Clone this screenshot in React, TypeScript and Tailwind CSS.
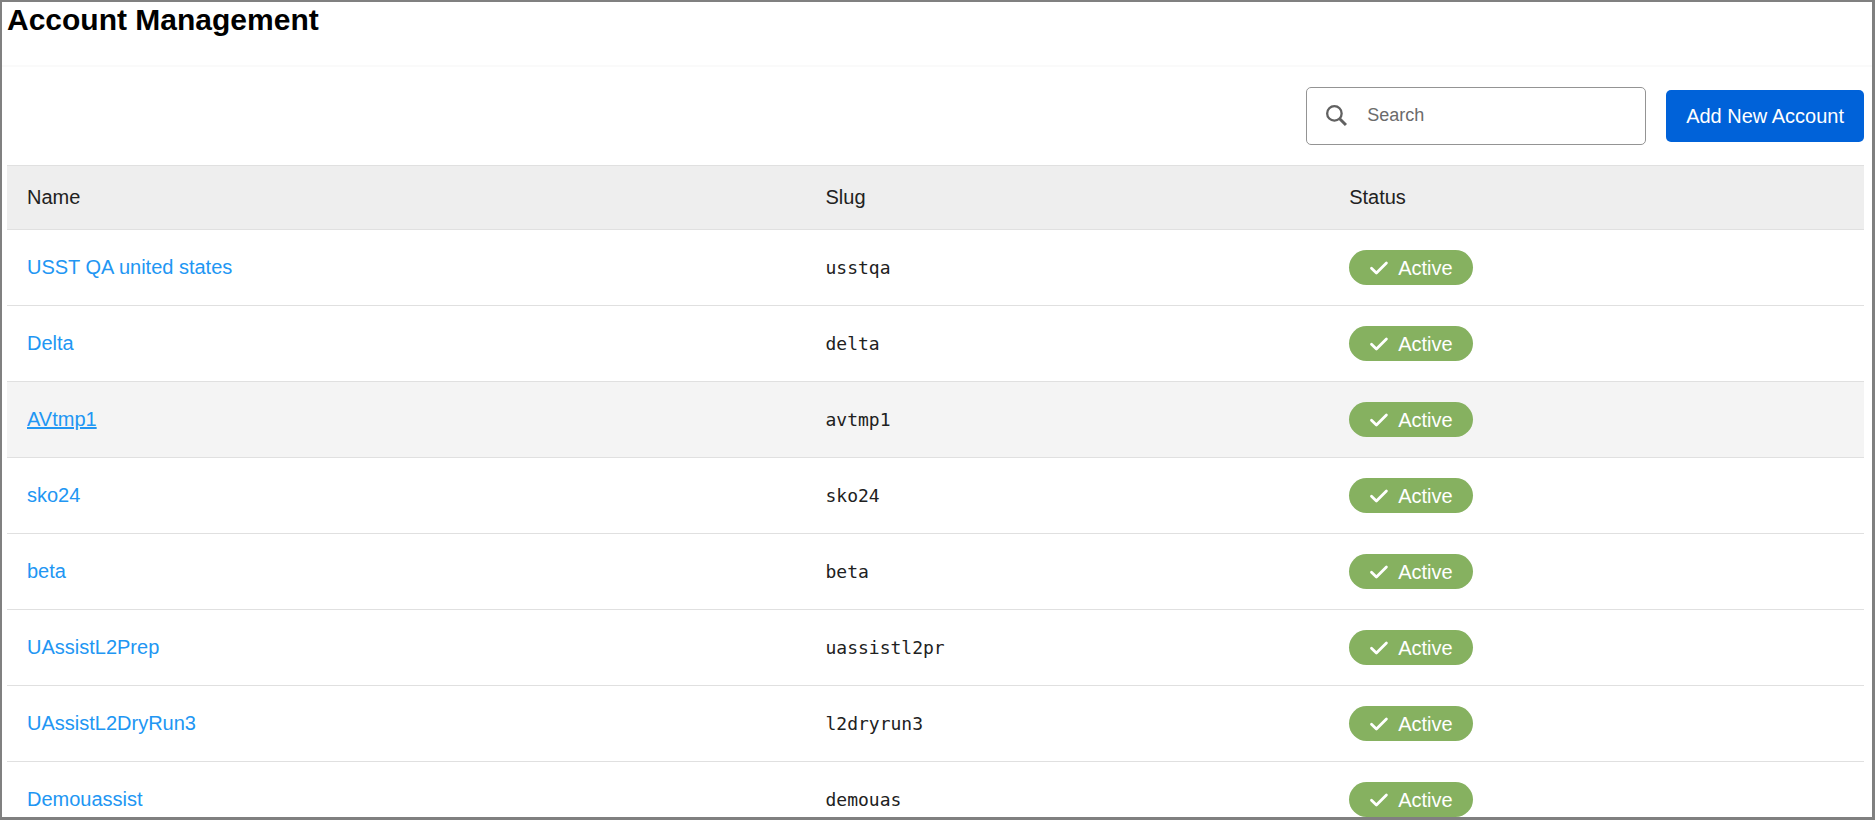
const accounts = [
  { name: "USST QA united states", slug: "usstqa" },
  { name: "Delta", slug: "delta" },
  { name: "AVtmp1", slug: "avtmp1", hovered: true },
  { name: "sko24", slug: "sko24" },
  { name: "beta", slug: "beta" },
  { name: "UAssistL2Prep", slug: "uassistl2pr" },
  { name: "UAssistL2DryRun3", slug: "l2dryrun3" },
  { name: "Demouassist", slug: "demouas" },
];

function SearchIcon() {
  return (
    <svg viewBox="0 0 20 20" className="h-[21px] w-[21px] shrink-0" fill="none" stroke="#616161" aria-hidden="true">
      <circle cx="8" cy="8" r="6.9" strokeWidth="2.2" />
      <path d="M12.8 12.8 19 19" strokeWidth="2.8" />
    </svg>
  );
}

function StatusBadge() {
  return (
    <span className="flex h-[35px] w-fit items-center gap-[9px] rounded-full bg-[#86b160] px-5 text-white">
      <svg
        viewBox="0 0 20 14"
        className="h-3.5 w-5"
        fill="none"
        stroke="currentColor"
        strokeWidth="2.8"
        strokeLinecap="round"
        strokeLinejoin="round"
        aria-hidden="true"
      >
        <path d="M2.5 7.2 7.4 12 17.4 2" />
      </svg>
      Active
    </span>
  );
}

export default function App() {
  return (
    <div className="h-screen pb-[3px]">
      <div className="h-full overflow-hidden border-2 border-r-3 border-b-3 border-[#808080] bg-white font-['Liberation_Sans',Arial,sans-serif] text-xl text-[#212121]">
        {/* Title */}
        <header className="border-b-2 border-[#fafafa] px-[5px] pb-[27px]">
          <h1 className="text-3xl font-bold text-black">Account Management</h1>
        </header>

        <main className="pr-2 pl-[5px]">
          {/* Toolbar */}
          <div className="flex items-center justify-end gap-5 py-5">
            <label className="flex h-[58px] w-[340px] items-center gap-5 rounded-[5px] border border-[#949494] px-[19px] pb-0.5">
              <SearchIcon />
              <input
                type="text"
                aria-label="Search"
                placeholder="Search"
                className="w-full min-w-0 text-lg outline-none placeholder:text-[#6b6b6b]"
              />
            </label>
            <button type="button" className="h-[52px] rounded-[5px] bg-[#0062d9] px-5 text-white">
              Add New Account
            </button>
          </div>

          {/* Accounts */}
          <table className="w-full table-fixed border-collapse text-left">
            <thead>
              <tr className="h-16 border-y border-[#e0e0e0] bg-[#eeeeee]">
                <th scope="col" className="w-[43%] px-5 pb-0.5 font-normal">Name</th>
                <th scope="col" className="w-[28.2%] px-5 pb-0.5 font-normal">Slug</th>
                <th scope="col" className="px-5 pb-0.5 font-normal">Status</th>
              </tr>
            </thead>
            <tbody>
              {accounts.map((account) => (
                <tr
                  key={account.slug}
                  className={`h-19 border-b border-[#e0e0e0] ${account.hovered ? "bg-[#f4f4f4]" : ""}`}
                >
                  <td className="px-5 pb-0.5">
                    <a
                      href="#"
                      className={`text-[#2196f3] hover:underline ${account.hovered ? "underline" : ""}`}
                    >
                      {account.name}
                    </a>
                  </td>
                  <td className="px-5 font-['DejaVu_Sans_Mono',monospace] text-lg">{account.slug}</td>
                  <td className="px-5">
                    <StatusBadge />
                  </td>
                </tr>
              ))}
            </tbody>
          </table>
        </main>
      </div>
    </div>
  );
}
